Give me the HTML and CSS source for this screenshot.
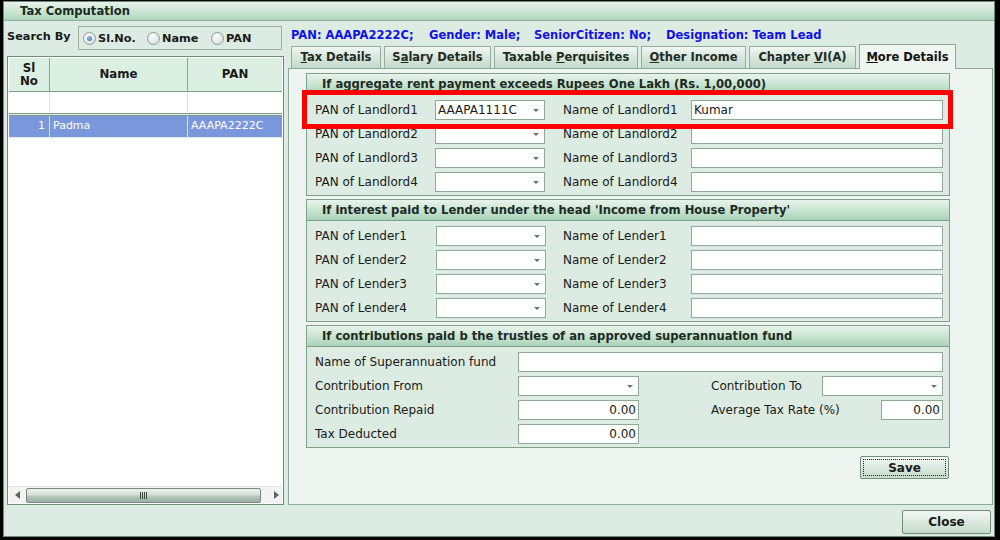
FILE: index.html
```html
<!DOCTYPE html>
<html>
<head>
<meta charset="utf-8">
<title>Tax Computation</title>
<link rel="stylesheet" href="styles.css">
</head>
<body>
<div class="window">
  <div class="titlebar">Tax Computation</div>
  <div class="main">
    <div class="leftcol">
      <div class="search">
        <span class="search-label">Search By</span>
        <div class="radiobox">
          <span class="radio r1"><span class="rb checked"></span>Sl.No.</span>
          <span class="radio r2"><span class="rb"></span>Name</span>
          <span class="radio r3"><span class="rb"></span>PAN</span>
        </div>
      </div>
      <div class="grid">
        <div class="ghead">
          <div class="c1">Sl<br>No</div>
          <div class="c2">Name</div>
          <div class="c3">PAN</div>
        </div>
        <div class="grow blank">
          <div class="c1"></div><div class="c2"></div><div class="c3"></div>
        </div>
        <div class="gsep"></div>
        <div class="grow sel">
          <div class="c1 num">1</div><div class="c2">Padma</div><div class="c3">AAAPA2222C</div>
        </div>
        <div class="gfill"></div>
        <div class="hscroll">
          <span class="arrow-l"></span>
          <div class="thumb"><span class="grip"></span></div>
          <span class="arrow-r"></span>
        </div>
      </div>
    </div>
    <div class="rightcol">
      <div class="info">
        <span class="i1">PAN: AAAPA2222C;</span><span class="i2">Gender: Male;</span><span class="i3">SeniorCitizen: No;</span><span class="i4">Designation: Team Lead</span>
      </div>
      <div class="tabs">
        <div class="tab t1"><u>T</u>ax Details</div>
        <div class="tab t2">S<u>a</u>lary Details</div>
        <div class="tab t3">Taxable <u>P</u>erquisites</div>
        <div class="tab t4"><u>O</u>ther Income</div>
        <div class="tab t5">Chapter <u>V</u>I(A)</div>
        <div class="tab t6 active"><u>M</u>ore Details</div>
      </div>
      <div class="panel">
        <div class="section s1">
          <div class="shead">If aggregate rent payment exceeds Rupees One Lakh (Rs. 1,00,000)</div>
          <div class="sbody">
            <div class="row">
              <span class="lab la">PAN of Landlord1</span>
              <div class="combo ca"><span class="val">AAAPA1111C</span><span class="dd"></span></div>
              <span class="lab lb">Name of Landlord1</span>
              <div class="input wide"><span class="val">Kumar</span></div>
            </div>
            <div class="row">
              <span class="lab la">PAN of Landlord2</span>
              <div class="combo ca"><span class="dd"></span></div>
              <span class="lab lb">Name of Landlord2</span>
              <div class="input wide"></div>
            </div>
            <div class="row">
              <span class="lab la">PAN of Landlord3</span>
              <div class="combo ca"><span class="dd"></span></div>
              <span class="lab lb">Name of Landlord3</span>
              <div class="input wide"></div>
            </div>
            <div class="row">
              <span class="lab la">PAN of Landlord4</span>
              <div class="combo ca"><span class="dd"></span></div>
              <span class="lab lb">Name of Landlord4</span>
              <div class="input wide"></div>
            </div>
          </div>
          <div class="highlight"></div>
        </div>
        <div class="section s2">
          <div class="shead">If interest paid to Lender under the head 'Income from House Property'</div>
          <div class="sbody">
            <div class="row">
              <span class="lab lc">PAN of Lender1</span>
              <div class="combo ca"><span class="dd"></span></div>
              <span class="lab ld">Name of Lender1</span>
              <div class="input wide"></div>
            </div>
            <div class="row">
              <span class="lab lc">PAN of Lender2</span>
              <div class="combo ca"><span class="dd"></span></div>
              <span class="lab ld">Name of Lender2</span>
              <div class="input wide"></div>
            </div>
            <div class="row">
              <span class="lab lc">PAN of Lender3</span>
              <div class="combo ca"><span class="dd"></span></div>
              <span class="lab ld">Name of Lender3</span>
              <div class="input wide"></div>
            </div>
            <div class="row">
              <span class="lab lc">PAN of Lender4</span>
              <div class="combo ca"><span class="dd"></span></div>
              <span class="lab ld">Name of Lender4</span>
              <div class="input wide"></div>
            </div>
          </div>
        </div>
        <div class="section s3">
          <div class="shead">If contributions paid b the trusties of an approved superannuation fund</div>
          <div class="sbody">
            <div class="row">
              <span class="lab le">Name of Superannuation fund</span>
              <div class="input fund"></div>
            </div>
            <div class="row">
              <span class="lab le">Contribution From</span>
              <div class="combo cb"><span class="dd"></span></div>
              <span class="lab lf">Contribution To</span>
              <div class="combo cb"><span class="dd"></span></div>
            </div>
            <div class="row">
              <span class="lab le">Contribution Repaid</span>
              <div class="input num cb"><span class="val">0.00</span></div>
              <span class="lab lg">Average Tax Rate (%)</span>
              <div class="input num rate"><span class="val">0.00</span></div>
            </div>
            <div class="row">
              <span class="lab le">Tax Deducted</span>
              <div class="input num cb"><span class="val">0.00</span></div>
            </div>
          </div>
        </div>
        <div class="saverow">
          <div class="btn save"><span class="focus">Save</span></div>
        </div>
      </div>
    </div>
  </div>
  <div class="footer">
    <div class="btn close">Close</div>
  </div>
</div>
</body>
</html>
```

FILE: styles.css
```css
html, body {
  margin: 0;
  padding: 0;
}
body {
  background: #000;
  padding: 1px 5px 3px 3px;
  width: 1000px;
  height: 540px;
  box-sizing: border-box;
  overflow: hidden;
  font-family: "DejaVu Sans", Verdana, sans-serif;
  font-size: 12px;
  color: #1a1a1a;
}
.window {
  width: 992px;
  height: 536px;
  box-sizing: border-box;
  border: 1px solid #6d8c78;
  background: #dcece2;
  display: flex;
  flex-direction: column;
}
.titlebar {
  flex: none;
  height: 18px;
  border-bottom: 1px solid #8fae9a;
  background: linear-gradient(#e6f3ea, #b0d8be);
  font-weight: bold;
  font-size: 11.6px;
  line-height: 19px;
  padding-left: 16px;
  color: #1b2a22;
}
.main {
  flex: none;
  height: 484px;
  box-sizing: border-box;
  padding: 5px 0 0 3px;
  display: flex;
  gap: 4px;
}

/* left column */
.leftcol {
  width: 277px;
  display: flex;
  flex-direction: column;
}
.search {
  height: 24px;
  display: flex;
  align-items: center;
  margin-bottom: 6px;
}
.search-label {
  width: 71px;
  font-weight: bold;
  font-size: 11.3px;
  position: relative;
  top: -2px;
}
.radiobox {
  width: 204px;
  height: 24px;
  box-sizing: border-box;
  border: 1px solid #9ab0a2;
  display: flex;
  align-items: center;
  padding-left: 4px;
  font-weight: bold;
  font-size: 11.3px;
}
.radio {
  display: flex;
  align-items: center;
  gap: 2px;
}
.r1, .r2 { width: 64px; }
.rb {
  width: 11px;
  height: 11px;
  border-radius: 50%;
  border: 1px solid #8d9c94;
  background: radial-gradient(circle at 40% 35%, #ffffff, #d9dfdc 80%);
  display: inline-block;
  position: relative;
}
.rb.checked::after {
  content: "";
  position: absolute;
  left: 3px;
  top: 3px;
  width: 5px;
  height: 5px;
  border-radius: 50%;
  background: radial-gradient(circle at 40% 35%, #9cc8f0, #1e5ba8);
}
.grid {
  flex: 1;
  box-sizing: border-box;
  border: 1px solid #6f8f7b;
  padding: 1px;
  background: #fff;
  display: flex;
  flex-direction: column;
}
.ghead {
  height: 34px;
  flex: none;
  box-sizing: border-box;
  border-bottom: 1px solid #7f9c89;
  background: #dcefe3;
  display: flex;
  font-weight: bold;
  font-size: 11.8px;
}
.ghead > div {
  display: flex;
  align-items: center;
  justify-content: center;
  text-align: center;
  line-height: 13px;
  border-right: 1px solid #8aa896;
  box-sizing: border-box;
}
.ghead .c3 { border-right: none; }
.c1 { width: 41px; }
.c2 { width: 138px; }
.c3 { width: 94px; }
.grow {
  height: 20px;
  display: flex;
  flex: none;
}
.grow > div {
  box-sizing: border-box;
  border-right: 1px solid #dce5df;
  line-height: 20px;
  padding-left: 3px;
  font-size: 11px;
  white-space: nowrap;
  overflow: hidden;
}
.grow > div.c3 { border-right: none; }
.gsep {
  height: 3px;
  flex: none;
  margin-top: 1px;
  box-sizing: border-box;
  border-top: 1px solid #7f9c89;
  border-bottom: 1px solid #7f9c89;
  background: #e2ece5;
}
.grow.sel {
  background: #7b97dc;
  color: #fff;
  border-bottom: 1px solid #e4ebe6;
  height: 21px;
}
.grow.sel > div { border-right-color: #d6def2; line-height: 20px; }
.grow.sel .num { text-align: right; padding-right: 4px; padding-left: 0; }
.gfill { flex: 1; }
.hscroll {
  height: 17px;
  flex: none;
  box-sizing: border-box;
  border-top: 1px solid #e0e6e2;
  background: #f1f4f2;
  display: flex;
  align-items: center;
}
.arrow-l, .arrow-r {
  width: 0;
  height: 0;
  border-top: 4px solid transparent;
  border-bottom: 4px solid transparent;
}
.arrow-l {
  border-right: 5px solid #566a5e;
  margin-left: 6px;
}
.arrow-r {
  border-left: 5px solid #566a5e;
  margin-left: 13px;
}
.thumb {
  width: 235px;
  height: 15px;
  margin-left: 6px;
  box-sizing: border-box;
  border: 1px solid #76877c;
  border-radius: 2px;
  background: linear-gradient(#eef2ef, #d4ddd7 45%, #b4c4b9 60%, #9db0a4);
  display: flex;
  align-items: center;
  justify-content: center;
}
.grip {
  width: 7px;
  height: 7px;
  background: repeating-linear-gradient(90deg, #3d4a42 0 1px, transparent 1px 2px);
}

/* right column */
.rightcol {
  width: 705px;
  display: flex;
  flex-direction: column;
}
.info {
  height: 19px;
  line-height: 18px;
  padding-left: 3px;
  color: #1111e6;
  font-weight: bold;
  font-size: 11.5px;
  white-space: nowrap;
}
.info span { display: inline-block; }
.i1 { width: 138px; }
.i2 { width: 105px; }
.i3 { width: 132px; }
.tabs {
  height: 23px;
  display: flex;
  align-items: flex-end;
  padding-left: 3px;
  gap: 3px;
  position: relative;
  z-index: 2;
}
.tab {
  height: 22px;
  box-sizing: border-box;
  border: 1px solid #94ad9d;
  border-bottom: none;
  background: linear-gradient(#f2f7f3 0, #dbe9df 40%, #c3dacb 100%);
  font-weight: bold;
  font-size: 11.5px;
  line-height: 21px;
  text-align: center;
  color: #1f2a24;
  white-space: nowrap;
}
.t1 { width: 90px; }
.t2 { width: 107px; }
.t3 { width: 144px; }
.t4 { width: 105px; }
.t5 { width: 107px; }
.t6 { width: 97px; }
.tab.active {
  height: 25px;
  margin-bottom: -1px;
  background: #eff6f2;
  border-color: #8ba996;
  line-height: 24px;
  color: #111;
}
.panel {
  flex: 1;
  box-sizing: border-box;
  border: 1px solid #8ba996;
  background: #eef5f1;
  padding: 4px 0 0 17px;
}
.section {
  width: 644px;
  box-sizing: border-box;
  border: 1px solid #7f9f8b;
  background: #dcece2;
  position: relative;
}
.s2, .s3 { margin-top: 3px; }
.shead {
  height: 20px;
  border-bottom: 1px solid #7f9f8b;
  background: linear-gradient(#e8f4ec, #c6e3d0 55%, #a9d3b7);
  font-weight: bold;
  font-size: 11.6px;
  line-height: 20px;
  padding-left: 15px;
  color: #1e2b24;
  white-space: nowrap;
}
.sbody {
  padding: 3px 0 1px 8px;
}
.row {
  height: 24px;
  display: flex;
  align-items: center;
}
.lab { white-space: nowrap; }
.la { width: 120px; }
.lb { width: 128px; margin-left: 18px; }
.lc { width: 121px; }
.ld { width: 128px; margin-left: 17px; }
.le { width: 203px; }
.lf { width: 111px; margin-left: 72px; }
.lg { width: 170px; margin-left: 72px; }
.combo, .input {
  height: 20px;
  box-sizing: border-box;
  border: 1px solid #8ea996;
  background: #fff;
  display: flex;
  align-items: center;
  position: relative;
}
.combo .val, .input .val {
  padding-left: 2px;
  font-size: 12px;
}
.ca { width: 110px; }
.cb { width: 121px; }
.wide { width: 252px; }
.fund { width: 425px; }
.rate { width: 62px; }
.input.num { justify-content: flex-end; }
.input.num .val { padding-right: 2px; padding-left: 0; }
.dd {
  position: absolute;
  right: 5px;
  top: 8px;
  width: 0;
  height: 0;
  border-left: 3px solid transparent;
  border-right: 3px solid transparent;
  border-top: 3px solid #66766c;
}
.highlight {
  position: absolute;
  left: -5px;
  top: 16px;
  width: 651px;
  height: 39px;
  box-sizing: border-box;
  border: 5px solid #ff0000;
  pointer-events: none;
}
.saverow {
  width: 644px;
  display: flex;
  justify-content: flex-end;
  margin-top: 8px;
}
.btn {
  width: 89px;
  height: 23px;
  box-sizing: border-box;
  border: 1px solid #6f8f7b;
  border-radius: 2px;
  background: linear-gradient(#f3f8f4, #dbe9df 50%, #c4dacb);
  font-weight: bold;
  font-size: 12px;
  display: flex;
  align-items: center;
  justify-content: center;
  color: #1b1b1b;
}
.save {
  margin-right: 1px;
  padding: 2px;
}
.save .focus {
  flex: 1;
  align-self: stretch;
  border: 1px dotted #222;
  display: flex;
  align-items: center;
  justify-content: center;
}
.footer {
  flex: 1;
  display: flex;
  justify-content: flex-end;
  align-items: flex-start;
  padding: 5px 3px 0 0;
}
.close { height: 24px; }
```
